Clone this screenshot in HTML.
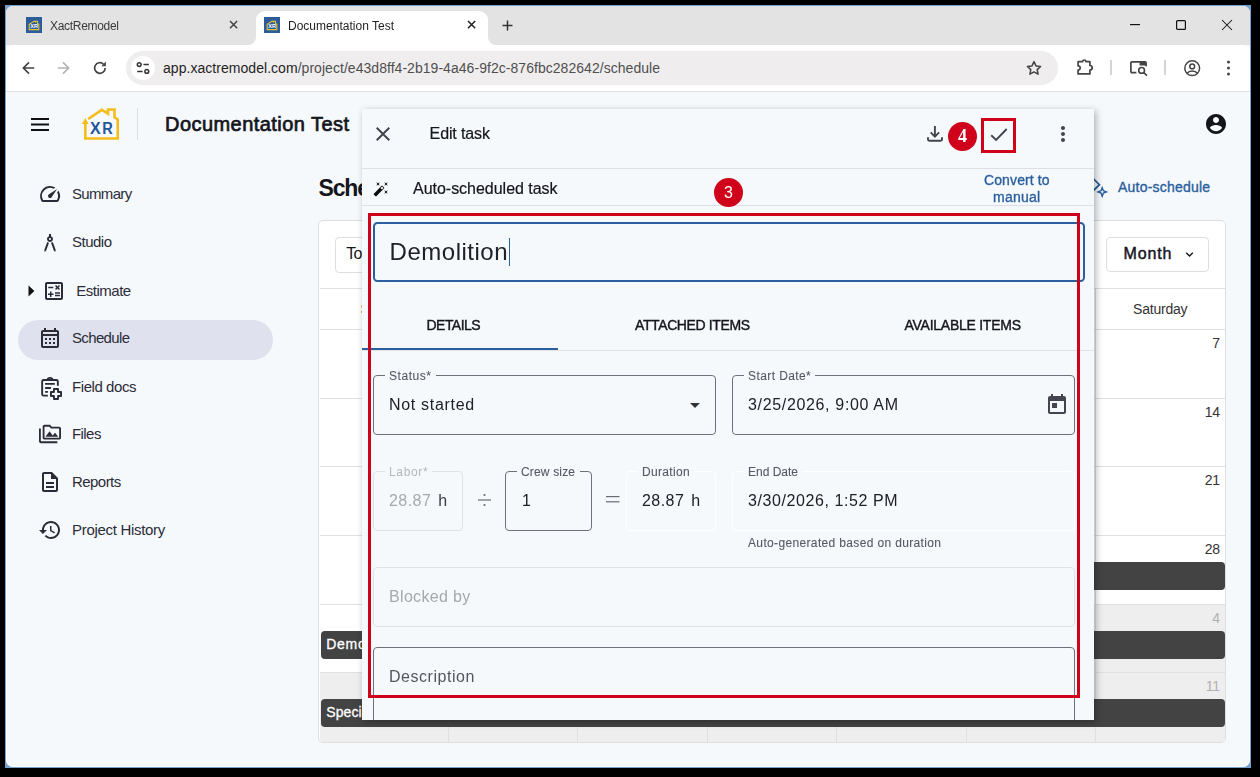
<!DOCTYPE html>
<html><head><meta charset="utf-8"><title>Documentation Test</title>
<style>
*{margin:0;padding:0;box-sizing:border-box}
html,body{width:1260px;height:777px;overflow:hidden;background:#000;font-family:"Liberation Sans",sans-serif}
.t{position:absolute;white-space:nowrap;display:block}
.a{position:absolute}
svg{position:absolute;overflow:visible}
#desk{position:absolute;left:5px;top:5px;width:1246px;height:763px;background:#74a2cc}
#win{position:absolute;left:6px;top:6px;width:1244px;height:761px;border-radius:7px;overflow:hidden;background:#f6f9fc}
#abs{position:absolute;left:-6px;top:-6px;width:1260px;height:777px}
</style></head>
<body>
<div id="desk"></div><div id="win"><div id="abs">
<div class="a" style="left:0.00px;top:0.00px;width:1260.00px;height:45.00px;background:#e3e3e3"></div>
<div class="a" style="left:256.00px;top:11.00px;width:232.00px;height:35.00px;background:#fff;border-radius:9px 9px 0 0"></div>
<svg style="left:248.00px;top:37.00px;" width="8.00" height="8.00" viewBox="0 0 8 8"><path d="M8 0v8H0A8 8 0 0 0 8 0z" fill="#fff"/></svg>
<svg style="left:488.00px;top:37.00px;" width="8.00" height="8.00" viewBox="0 0 8 8"><path d="M0 0v8h8A8 8 0 0 1 0 0z" fill="#fff"/></svg>
<div class="a" style="left:5.00px;top:45.00px;width:1246.00px;height:46.00px;background:#fff;border-radius:9px 9px 0 0"></div>
<div class="a" style="left:0.00px;top:91.00px;width:1260.00px;height:1.00px;background:#dfe1e5"></div>
<svg style="left:26.00px;top:17.00px;" width="16.00" height="16.00" viewBox="0 0 16 16"><rect width="16" height="16" fill="#2c5c99"/><path d="M3.2 12.6V7.4L8.2 4.1l1.3.9V4.2h2v2.2l1.3.9v5.3z" fill="none" stroke="#e8c33a" stroke-width="1.1"/><text x="8.1" y="11.4" font-family="Liberation Sans" font-weight="700" font-size="5.6" fill="#fff" text-anchor="middle">XR</text></svg>
<svg style="left:264.00px;top:17.00px;" width="16.00" height="16.00" viewBox="0 0 16 16"><rect width="16" height="16" fill="#2c5c99"/><path d="M3.2 12.6V7.4L8.2 4.1l1.3.9V4.2h2v2.2l1.3.9v5.3z" fill="none" stroke="#e8c33a" stroke-width="1.1"/><text x="8.1" y="11.4" font-family="Liberation Sans" font-weight="700" font-size="5.6" fill="#fff" text-anchor="middle">XR</text></svg>
<span id="tab1" class="t" style="left:50.00px;top:18.04px;font:400 12px/16px 'Liberation Sans', sans-serif;color:#3a3a3a;letter-spacing:-0.305px;will-change:transform;">XactRemodel</span>
<span id="tab2" class="t" style="left:288.00px;top:18.04px;font:400 12px/16px 'Liberation Sans', sans-serif;color:#1f1f1f;letter-spacing:0.009px;will-change:transform;">Documentation Test</span>
<svg style="left:230.40px;top:21.40px;" width="7.20" height="7.20" viewBox="0 0 7.2 7.2"><path d="M0 0L7.2 7.2 M7.2 0L0 7.2" stroke="#444" stroke-width="1.5" fill="none"/></svg>
<svg style="left:468.40px;top:21.40px;" width="7.20" height="7.20" viewBox="0 0 7.2 7.2"><path d="M0 0L7.2 7.2 M7.2 0L0 7.2" stroke="#222" stroke-width="1.5" fill="none"/></svg>
<svg style="left:502.00px;top:20.00px;" width="11.00" height="11.00" viewBox="0 0 11 11"><path d="M5.5 0.5v10M0.5 5.5h10" stroke="#333" stroke-width="1.5" fill="none"/></svg>
<svg style="left:1130.00px;top:24.00px;" width="10.00" height="1.20" viewBox="0 0 10 1.2"><rect width="10" height="1.2" fill="#111"/></svg>
<svg style="left:1176.00px;top:20.00px;" width="10.00" height="10.00" viewBox="0 0 10 10"><rect x=".6" y=".6" width="8.8" height="8.8" rx="1" fill="none" stroke="#111" stroke-width="1.2"/></svg>
<svg style="left:1222.00px;top:20.00px;" width="10.00" height="10.00" viewBox="0 0 10 10"><path d="M0 0L10 10 M10 0L0 10" stroke="#111" stroke-width="1.05" fill="none"/></svg>
<svg style="left:21.50px;top:61.00px;" width="14.00" height="14.00" viewBox="0 0 14 14"><path d="M12.2 7H1.8M7 1.4L1.4 7 7 12.6" stroke="#444" stroke-width="1.7" fill="none" stroke-linejoin="miter"/></svg>
<svg style="left:56.40px;top:61.00px;" width="14.00" height="14.00" viewBox="0 0 14 14"><g transform="translate(14 0) scale(-1 1)"><path d="M12.2 7H1.8M7 1.4L1.4 7 7 12.6" stroke="#b4b4b4" stroke-width="1.7" fill="none" stroke-linejoin="miter"/></g></svg>
<svg style="left:93.00px;top:61.00px;" width="14.00" height="14.00" viewBox="0 0 14 14"><path d="M12.2 7A5.3 5.3 0 1 1 10.4 3" stroke="#444" stroke-width="1.7" fill="none"/><path d="M12.9 0.6v4.6H8.3z" fill="#444"/></svg>
<div class="a" style="left:126.00px;top:51.00px;width:932.00px;height:34.00px;background:#efedee;border-radius:17px"></div>
<div class="a" style="left:131.00px;top:56.00px;width:24.00px;height:24.00px;background:#fff;border-radius:12px"></div>
<svg style="left:136.00px;top:61.00px;" width="14.00" height="14.00" viewBox="0 0 14 14"><g stroke="#333" stroke-width="1.5" fill="none"><circle cx="3.2" cy="3.6" r="1.9"/><path d="M7.4 3.6h5.4M1.2 10.4h5.4"/><circle cx="10.8" cy="10.4" r="1.9"/></g></svg>
<span id="url" class="t" style="left:163.00px;top:58.75px;font:400 14px/18px 'Liberation Sans', sans-serif;color:#4f4f4f;letter-spacing:0.042px;"><span style="color:#1f1f1f">app.xactremodel.com</span>/project/e43d8ff4-2b19-4a46-9f2c-876fbc282642/schedule</span>
<svg style="left:1026.00px;top:60.00px;" width="16.00" height="16.00" viewBox="0 0 16 16"><path d="M8 1.6l2 4.3 4.6.5-3.4 3.2.9 4.6L8 11.9l-4.1 2.3.9-4.6L1.4 6.4 6 5.9z" fill="none" stroke="#444" stroke-width="1.5" stroke-linejoin="round"/></svg>
<svg style="left:1076.50px;top:59.00px;" width="17.00" height="16.00" viewBox="0 0 17 16"><path d="M1.1 2.7H5.6a1.7 1.7 0 0 1 3.4 0H12.9V6.5a2.3 2.3 0 0 1 0 4.6V14.9H1.1V11a2.1 2.1 0 0 0 0-4.2z" fill="none" stroke="#444" stroke-width="1.7" stroke-linejoin="round"/></svg>
<div class="a" style="left:1110.30px;top:60.00px;width:1.30px;height:15.00px;background:#d5d5d5"></div>
<svg style="left:1129.50px;top:61.00px;" width="18.00" height="15.00" viewBox="0 0 18 15"><path d="M6.4 11.6H1.9a1 1 0 0 1-1-1V1.9a1 1 0 0 1 1-1h13.2a1 1 0 0 1 1 1v3.4" fill="none" stroke="#444" stroke-width="1.7"/><rect x="9.6" y="0.9" width="6.5" height="3.6" fill="#444"/><circle cx="11.6" cy="9.4" r="2.9" fill="none" stroke="#444" stroke-width="1.6"/><path d="M13.8 11.6l3.2 3" stroke="#444" stroke-width="1.7"/></svg>
<div class="a" style="left:1164.30px;top:60.00px;width:1.30px;height:15.00px;background:#d5d5d5"></div>
<svg style="left:1183.50px;top:59.50px;" width="16.40" height="16.40" viewBox="0 0 16.4 16.4"><circle cx="8.2" cy="8.2" r="7.4" fill="none" stroke="#444" stroke-width="1.5"/><circle cx="8.2" cy="6.4" r="2.4" fill="none" stroke="#444" stroke-width="1.5"/><path d="M3 13.2c1.2-1.6 3-2.3 5.2-2.3s4 .7 5.2 2.3" fill="none" stroke="#444" stroke-width="1.5"/></svg>
<svg style="left:1226.50px;top:60.00px;" width="3.00" height="16.00" viewBox="0 0 3 16"><circle cx="1.5" cy="2" r="1.5" fill="#444"/><circle cx="1.5" cy="8" r="1.5" fill="#444"/><circle cx="1.5" cy="14" r="1.5" fill="#444"/></svg>
<div class="a" style="left:6.00px;top:92.00px;width:1244.00px;height:675.00px;border:1px solid #fff;border-top:0;border-radius:0 0 7px 7px"></div>
<svg style="left:31.00px;top:118.00px;" width="18.00" height="13.00" viewBox="0 0 18 13"><path d="M0 1h18M0 6.5h18M0 12h18" stroke="#111" stroke-width="2" fill="none"/></svg>
<svg style="left:80.00px;top:106.00px;" width="42.00" height="36.00" viewBox="0 0 42 36"><path d="M8.2 13L21.8 3.8 28 7.7V3.45H34.5V11.3L37.75 13.4V32.45H5.35V17" fill="none" stroke="#f5bc1a" stroke-width="2.6" stroke-linejoin="miter"/><path d="M5.3 12.1L1.9 17.9h6.8z" fill="#f5bc1a"/><g font-family="Liberation Sans" font-weight="700" font-size="16.6" fill="#1f5799"><text x="10" y="27.7" transform="translate(10 0) scale(.96 1) translate(-10 0)">X</text><text x="0" y="27.7" transform="translate(22.2 0) scale(.88 1)">R</text></g></svg>
<div class="a" style="left:137.00px;top:108.00px;width:1.00px;height:32.00px;background:#dcdfe4"></div>
<span id="title" class="t" style="left:165.00px;top:110.67px;font:400 20px/26px 'Liberation Sans', sans-serif;color:#15151c;letter-spacing:0.447px;-webkit-text-stroke:0.70px #15151c;">Documentation Test</span>
<svg style="left:1204.00px;top:112.00px;" width="24.00" height="24.00" viewBox="0 0 24 24"><path d="M12 2C6.48 2 2 6.48 2 12s4.48 10 10 10 10-4.48 10-10S17.52 2 12 2zm0 3c1.66 0 3 1.34 3 3s-1.34 3-3 3-3-1.34-3-3 1.34-3 3-3zm0 14.2c-2.5 0-4.71-1.28-6-3.22.03-1.99 4-3.08 6-3.08 1.99 0 5.97 1.09 6 3.08-1.29 1.94-3.5 3.22-6 3.22z" fill="#15151c"/></svg>
<div class="a" style="left:18.00px;top:320.00px;width:255.00px;height:40.00px;background:#dfe2ee;border-radius:20px"></div>
<span id="nav0" class="t" style="left:72.00px;top:184.20px;font:400 15px/20px 'Liberation Sans', sans-serif;color:#2c2c38;letter-spacing:-0.665px;">Summary</span>
<svg style="left:38.00px;top:182.00px;" width="24.00" height="24.00" viewBox="0 0 24 24"><path d="M20.38 8.57l-1.23 1.85a8 8 0 0 1-.22 7.58H5.07A8 8 0 0 1 15.58 6.85l1.85-1.23A10 10 0 0 0 3.35 19a2 2 0 0 0 1.72 1h13.85a2 2 0 0 0 1.74-1 10 10 0 0 0-.27-10.44zm-9.79 6.84a2 2 0 0 0 2.83 0l5.66-8.49-8.49 5.66a2 2 0 0 0 0 2.83z" fill="#2c2c38"/></svg>
<span id="nav1" class="t" style="left:72.00px;top:232.20px;font:400 15px/20px 'Liberation Sans', sans-serif;color:#2c2c38;letter-spacing:-0.509px;">Studio</span>
<svg style="left:38.00px;top:231.00px;" width="24.00" height="24.00" viewBox="0 0 24 24"><path d="M6.36 18.78L6.61 21l1.62-1.54 2.77-7.6c-.68-.17-1.28-.51-1.77-.98l-2.87 7.9zM14.77 10.88c-.49.47-1.1.81-1.77.98l2.77 7.6L17.39 21l.26-2.22-2.88-7.9zM15 8c0-1.3-.84-2.4-2-2.82V3h-2v2.18C9.84 5.6 9 6.7 9 8c0 1.66 1.34 3 3 3s3-1.34 3-3zm-3 1c-.55 0-1-.45-1-1s.45-1 1-1 1 .45 1 1-.45 1-1 1z" fill="#2c2c38"/></svg>
<span id="nav2" class="t" style="left:76.30px;top:281.20px;font:400 15px/20px 'Liberation Sans', sans-serif;color:#2c2c38;letter-spacing:-0.494px;">Estimate</span>
<svg style="left:42.00px;top:279.00px;" width="24.00" height="24.00" viewBox="0 0 24 24"><path d="M19 3H5c-1.1 0-2 .9-2 2v14c0 1.1.9 2 2 2h14c1.1 0 2-.9 2-2V5c0-1.1-.9-2-2-2zm0 16H5V5h14v14zM6.25 7.72h5v1.5h-5zM13 15.75h5v1.5h-5zM13 13.25h5v1.5h-5zM8 18h1.5v-2h2v-1.5h-2v-2H8v2H6V16h2zM14.09 10.95l1.41-1.41 1.41 1.41 1.06-1.06-1.41-1.42 1.41-1.41L16.91 6 15.5 7.41 14.09 6l-1.06 1.06 1.41 1.41-1.41 1.42z" fill="#2c2c38"/></svg>
<span id="nav3" class="t" style="left:72.00px;top:328.20px;font:400 15px/20px 'Liberation Sans', sans-serif;color:#2c2c38;letter-spacing:-0.652px;">Schedule</span>
<svg style="left:38.00px;top:326.00px;" width="24.00" height="24.00" viewBox="0 0 24 24"><path d="M19 4h-1V2h-2v2H8V2H6v2H5c-1.11 0-1.99.9-1.99 2L3 20c0 1.1.89 2 2 2h14c1.1 0 2-.9 2-2V6c0-1.1-.9-2-2-2zm0 16H5V10h14v10zm0-12H5V6h14v2zM7 12h2v2H7zm4 0h2v2h-2zm4 0h2v2h-2zM7 16h2v2H7zm4 0h2v2h-2zm4 0h2v2h-2z" fill="#2c2c38"/></svg>
<span id="nav4" class="t" style="left:72.00px;top:377.20px;font:400 15px/20px 'Liberation Sans', sans-serif;color:#2c2c38;letter-spacing:-0.431px;">Field docs</span>
<span id="nav5" class="t" style="left:72.00px;top:424.20px;font:400 15px/20px 'Liberation Sans', sans-serif;color:#2c2c38;letter-spacing:-0.568px;">Files</span>
<svg style="left:39.00px;top:423.00px;" width="22.00" height="22.00" viewBox="0 0 24 24"><path d="M2 6H0v5h.01L0 20c0 1.1.9 2 2 2h18v-2H2V6zm5 9h14l-3.5-4.5-2.5 3.01L11.5 9zM22 4h-8l-2-2H6c-1.1 0-1.99.9-1.99 2L4 16c0 1.1.9 2 2 2h16c1.1 0 2-.9 2-2V6c0-1.1-.9-2-2-2zm0 12H6V4h5.17l1.41 1.41.59.59H22v10z" fill="#2c2c38"/></svg>
<span id="nav6" class="t" style="left:72.00px;top:472.20px;font:400 15px/20px 'Liberation Sans', sans-serif;color:#2c2c38;letter-spacing:-0.555px;">Reports</span>
<svg style="left:38.00px;top:470.00px;" width="24.00" height="24.00" viewBox="0 0 24 24"><path d="M8 16h8v2H8zm0-4h8v2H8zm6-10H6c-1.1 0-2 .9-2 2v16c0 1.1.89 2 1.99 2H18c1.1 0 2-.9 2-2V8l-6-6zm4 18H6V4h7v5h5v11z" fill="#2c2c38"/></svg>
<span id="nav7" class="t" style="left:72.00px;top:520.20px;font:400 15px/20px 'Liberation Sans', sans-serif;color:#2c2c38;letter-spacing:-0.302px;">Project History</span>
<svg style="left:38.00px;top:518.00px;" width="24.00" height="24.00" viewBox="0 0 24 24"><path d="M13 3c-4.97 0-9 4.03-9 9H1l3.89 3.89.07.14L9 12H6c0-3.87 3.13-7 7-7s7 3.13 7 7-3.13 7-7 7c-1.93 0-3.68-.79-4.94-2.06l-1.42 1.42C8.27 19.99 10.51 21 13 21c4.97 0 9-4.03 9-9s-4.03-9-9-9zm-1 5v5l4.28 2.54.72-1.21-3.5-2.08V8H12z" fill="#2c2c38"/></svg>
<svg style="left:38.00px;top:374.00px;" width="26.00" height="28.00" viewBox="0 0 26 28"><g fill="none" stroke="#2c2c38" stroke-width="1.9"><path d="M19.85 11.7V7.5Q19.85 6 18.35 6H5.65Q4.15 6 4.15 7.5V20.15Q4.15 21.65 5.65 21.65H9.9"/><path d="M9.4 6Q9.7 3.9 12 3.9Q14.3 3.9 14.6 6" stroke-width="1.8"/><path d="M7.1 9.9H16.8M7.1 14H12.9M7.1 17.9H9.9"/><path d="M15.95 14.95H20.05V17.95H23.05V22.05H20.05V24.95H15.95V22.05H12.95V17.95H15.95Z" stroke-linejoin="round"/></g></svg>
<svg style="left:28.00px;top:285.00px;" width="7.00" height="12.00" viewBox="0 0 7 12"><path d="M.5 .6L6.4 6 .5 11.4z" fill="#111"/></svg>
<span id="h1" class="t" style="left:318.40px;top:173.43px;font:700 23px/30px 'Liberation Sans', sans-serif;color:#15151c;letter-spacing:-1.094px;">Schedule</span>
<svg style="left:1076.00px;top:172.00px;" width="32.00" height="26.00" viewBox="0 0 32 26"><g fill="none" stroke="#2b5f9e" stroke-width="1.8" stroke-linejoin="miter"><path d="M15 4.4l8.4 8.3L15 21"/><path d="M26.2 15.7l1.15 3.05 3.05 1.2-3.05 1.2-1.15 3.05-1.15-3.05-3.05-1.2 3.05-1.2z" stroke-width="1.4"/></g></svg>
<span id="autos" class="t" style="left:1118.00px;top:178.35px;font:400 14px/18px 'Liberation Sans', sans-serif;color:#2b5f9e;letter-spacing:0.207px;-webkit-text-stroke:0.35px #2b5f9e;">Auto-schedule</span>
<div class="a" style="left:318.00px;top:220.00px;width:908.00px;height:523.00px;background:#fff;border:1px solid #dedede;border-radius:5px"></div>
<div class="a" style="left:707.37px;top:604.00px;width:517.63px;height:68.50px;background:#eeeeee"></div>
<div class="a" style="left:319.50px;top:672.50px;width:905.50px;height:69.00px;background:#eeeeee;border-radius:0 0 4px 4px"></div>
<div class="a" style="left:319.50px;top:287.50px;width:905.50px;height:1.00px;background:#e0e0e0"></div>
<div class="a" style="left:319.50px;top:328.50px;width:905.50px;height:1.00px;background:#e0e0e0"></div>
<div class="a" style="left:319.50px;top:397.50px;width:905.50px;height:1.00px;background:#e0e0e0"></div>
<div class="a" style="left:319.50px;top:466.00px;width:905.50px;height:1.00px;background:#e0e0e0"></div>
<div class="a" style="left:319.50px;top:534.50px;width:905.50px;height:1.00px;background:#e0e0e0"></div>
<div class="a" style="left:319.50px;top:603.50px;width:905.50px;height:1.00px;background:#e0e0e0"></div>
<div class="a" style="left:319.50px;top:672.00px;width:905.50px;height:1.00px;background:#e0e0e0"></div>
<div class="a" style="left:447.79px;top:288.00px;width:1.00px;height:453.50px;background:#e0e0e0"></div>
<div class="a" style="left:577.33px;top:288.00px;width:1.00px;height:453.50px;background:#e0e0e0"></div>
<div class="a" style="left:706.87px;top:288.00px;width:1.00px;height:453.50px;background:#e0e0e0"></div>
<div class="a" style="left:836.41px;top:288.00px;width:1.00px;height:453.50px;background:#e0e0e0"></div>
<div class="a" style="left:965.95px;top:288.00px;width:1.00px;height:453.50px;background:#e0e0e0"></div>
<div class="a" style="left:1095.49px;top:288.00px;width:1.00px;height:453.50px;background:#e0e0e0"></div>
<div class="a" style="left:335.00px;top:237.00px;width:66.00px;height:36.00px;border:1px solid #dedede;border-radius:4px;background:#fff"></div>
<span id="today" class="t" style="left:346.20px;top:242.86px;font:400 16px/21px 'Liberation Sans', sans-serif;color:#15151c;letter-spacing:-0.706px;">Today</span>
<div class="a" style="left:1106.00px;top:237.00px;width:103.00px;height:35.00px;border:1px solid #dedede;border-radius:4px;background:#fff"></div>
<span id="month" class="t" style="left:1123.60px;top:242.86px;font:400 16px/21px 'Liberation Sans', sans-serif;color:#15151c;letter-spacing:0.833px;-webkit-text-stroke:0.45px #15151c;">Month</span>
<svg style="left:1185.00px;top:250.50px;" width="9.00" height="7.00" viewBox="0 0 9 7"><path d="M1.2 1.8l3.3 3.2 3.3-3.2" fill="none" stroke="#15151c" stroke-width="1.4"/></svg>
<span id="sat" class="t" style="left:1133.00px;top:300.15px;font:400 14px/18px 'Liberation Sans', sans-serif;color:#333;letter-spacing:-0.207px;">Saturday</span>
<span id="sun" class="t" style="left:360.50px;top:300.15px;font:400 14px/18px 'Liberation Sans', sans-serif;color:#333;letter-spacing:0.203px;">Sunday</span>
<span class="t" style="right:40.1px;top:333.7px;font:400 14px/18px 'Liberation Sans',sans-serif;color:#333;letter-spacing:-.2px">7</span>
<span class="t" style="right:40.1px;top:402.7px;font:400 14px/18px 'Liberation Sans',sans-serif;color:#333;letter-spacing:-.2px">14</span>
<span class="t" style="right:40.1px;top:470.7px;font:400 14px/18px 'Liberation Sans',sans-serif;color:#333;letter-spacing:-.2px">21</span>
<span class="t" style="right:40.1px;top:539.7px;font:400 14px/18px 'Liberation Sans',sans-serif;color:#333;letter-spacing:-.2px">28</span>
<span class="t" style="right:40.1px;top:608.7px;font:400 14px/18px 'Liberation Sans',sans-serif;color:#b0b0b0;letter-spacing:-.2px">4</span>
<span class="t" style="right:40.1px;top:676.7px;font:400 14px/18px 'Liberation Sans',sans-serif;color:#b0b0b0;letter-spacing:-.2px">11</span>
<div class="a" style="left:709.37px;top:562.00px;width:515.63px;height:28.00px;background:#434343;border-radius:4px"></div>
<div class="a" style="left:321.00px;top:631.00px;width:904.00px;height:28.00px;background:#434343;border-radius:4px"></div>
<div class="a" style="left:321.00px;top:699.00px;width:904.00px;height:28.00px;background:#434343;border-radius:4px"></div>
<span id="ev1" class="t" style="left:326.20px;top:634.75px;font:400 14px/18px 'Liberation Sans', sans-serif;color:#fff;letter-spacing:0.719px;-webkit-text-stroke:0.30px #fff;">Demolition</span>
<span id="ev2" class="t" style="left:326.20px;top:703.15px;font:400 14px/18px 'Liberation Sans', sans-serif;color:#fff;letter-spacing:0.126px;-webkit-text-stroke:0.30px #fff;">Special</span>
<div class="a" style="left:362.00px;top:109.00px;width:732.00px;height:610.50px;background:#f6f9fc;box-shadow:2px 2px 7px rgba(0,0,0,.3)"></div>
<div class="a" style="left:362px;top:109px;width:732px;height:610.5px;overflow:hidden;will-change:transform"><div class="a" style="left:-362px;top:-109px;width:1260px;height:777px">
<svg style="left:371.00px;top:122.00px;" width="24.00" height="24.00" viewBox="0 0 24 24"><path d="M19 6.41L17.59 5 12 10.59 6.41 5 5 6.41 10.59 12 5 17.59 6.41 19 12 13.41 17.59 19 19 17.59 13.41 12z" fill="#44444f"/></svg>
<span id="edit" class="t" style="left:429.60px;top:123.26px;font:400 16px/21px 'Liberation Sans', sans-serif;color:#15151c;letter-spacing:-0.120px;-webkit-text-stroke:0.20px #15151c;">Edit task</span>
<svg style="left:925.00px;top:124.00px;" width="20.00" height="19.00" viewBox="0 0 20 19"><g fill="none" stroke="#44444f" stroke-width="1.9"><path d="M9.9 2v10.4M5.7 8.4l4.2 4.2 4.2-4.2" stroke-linejoin="miter"/><path d="M3 13.2v2.3q0 1.2 1.2 1.2h11.6q1.2 0 1.2-1.2v-2.3"/></g></svg>
<svg style="left:985.00px;top:122.00px;" width="28.00" height="26.00" viewBox="0 0 28 26"><path d="M6.2 13.3l4.9 4.6L21.7 7" fill="none" stroke="#44444f" stroke-width="1.9" stroke-linejoin="miter"/></svg>
<svg style="left:1051.00px;top:122.00px;" width="24.00" height="24.00" viewBox="0 0 24 24"><path d="M12 8c1.1 0 2-.9 2-2s-.9-2-2-2-2 .9-2 2 .9 2 2 2zm0 2c-1.1 0-2 .9-2 2s.9 2 2 2 2-.9 2-2-.9-2-2-2zm0 6c-1.1 0-2 .9-2 2s.9 2 2 2 2-.9 2-2-.9-2-2-2z" fill="#44444f"/></svg>
<div class="a" style="left:362.00px;top:167.50px;width:732.00px;height:1.00px;background:#dcdfe3"></div>
<svg style="left:373.10px;top:180.80px;" width="16.00" height="16.00" viewBox="0 0 24 24"><path d="M7.5 5.6L10 7 8.6 4.5 10 2 7.5 3.4 5 2l1.4 2.5L5 7zm12 9.8L17 14l1.4 2.5L17 19l2.5-1.4L22 19l-1.4-2.5L22 14zM22 2l-2.5 1.4L17 2l1.4 2.5L17 7l2.5-1.4L22 7l-1.4-2.5zm-7.63 5.29c-.39-.39-1.02-.39-1.41 0L1.29 18.96c-.39.39-.39 1.02 0 1.41l2.34 2.34c.39.39 1.02.39 1.41 0L16.7 11.05c.39-.39.39-1.02 0-1.41l-2.33-2.35zm-1.03 5.49l-2.12-2.12 2.44-2.44 2.12 2.12-2.44 2.44z" fill="#0c0c0c"/></svg>
<span id="autotask" class="t" style="left:413.00px;top:178.26px;font:400 16px/21px 'Liberation Sans', sans-serif;color:#15151c;letter-spacing:-0.021px;-webkit-text-stroke:0.20px #15151c;">Auto-scheduled task</span>
<span id="conv1" class="t" style="left:984.00px;top:171.35px;font:400 14px/18px 'Liberation Sans', sans-serif;color:#2b5f9e;letter-spacing:0.112px;-webkit-text-stroke:0.35px #2b5f9e;">Convert to</span>
<span id="conv2" class="t" style="left:993.00px;top:188.35px;font:400 14px/18px 'Liberation Sans', sans-serif;color:#2b5f9e;letter-spacing:0.256px;-webkit-text-stroke:0.35px #2b5f9e;">manual</span>
<div class="a" style="left:362.00px;top:204.50px;width:732.00px;height:1.00px;background:#dcdfe3"></div>
<div class="a" style="left:373.00px;top:222.00px;width:711.50px;height:59.50px;border:2px solid #2b5f9e;border-radius:4.5px"></div>
<span id="name" class="t" style="left:389.60px;top:236.38px;font:400 24px/31px 'Liberation Sans', sans-serif;color:#202028;letter-spacing:0.512px;">Demolition</span>
<div class="a" style="left:509.30px;top:238.00px;width:1.00px;height:27.50px;background:#2b5f9e"></div>
<span id="tabA" class="t" style="left:426.50px;top:315.75px;font:400 14px/18px 'Liberation Sans', sans-serif;color:#15151c;letter-spacing:-0.535px;-webkit-text-stroke:0.40px #15151c;">DETAILS</span>
<span id="tabB" class="t" style="left:635.00px;top:315.75px;font:400 14px/18px 'Liberation Sans', sans-serif;color:#15151c;letter-spacing:-0.388px;-webkit-text-stroke:0.40px #15151c;">ATTACHED ITEMS</span>
<span id="tabC" class="t" style="left:904.50px;top:315.75px;font:400 14px/18px 'Liberation Sans', sans-serif;color:#15151c;letter-spacing:-0.257px;-webkit-text-stroke:0.40px #15151c;">AVAILABLE ITEMS</span>
<div class="a" style="left:362.00px;top:350.00px;width:732.00px;height:1.00px;background:#e1e3e7"></div>
<div class="a" style="left:362.00px;top:347.70px;width:196.00px;height:2.30px;background:#2b5f9e"></div>
<div class="a" style="left:373.00px;top:375.00px;width:343.00px;height:59.50px;border:1px solid #70707c;border-radius:4px"></div><div class="a" style="left:385.00px;top:374.00px;width:50.50px;height:3.00px;background:#f6f9fc"></div>
<span id="lstatus" class="t" style="left:389.00px;top:367.84px;font:400 12px/16px 'Liberation Sans', sans-serif;color:#585864;letter-spacing:0.549px;-webkit-text-stroke:0.10px #585864;">Status*</span>
<span id="vstatus" class="t" style="left:389.00px;top:393.96px;font:400 16px/21px 'Liberation Sans', sans-serif;color:#202028;letter-spacing:0.693px;">Not started</span>
<svg style="left:690.00px;top:402.50px;" width="10.00" height="5.00" viewBox="0 0 10 5"><path d="M0 0h10L5 5z" fill="#333"/></svg>
<div class="a" style="left:732.00px;top:375.00px;width:343.00px;height:59.50px;border:1px solid #70707c;border-radius:4px"></div><div class="a" style="left:744.00px;top:374.00px;width:71.30px;height:3.00px;background:#f6f9fc"></div>
<span id="lstart" class="t" style="left:748.00px;top:367.84px;font:400 12px/16px 'Liberation Sans', sans-serif;color:#585864;letter-spacing:0.410px;-webkit-text-stroke:0.10px #585864;">Start Date*</span>
<span id="vstart" class="t" style="left:748.00px;top:393.96px;font:400 16px/21px 'Liberation Sans', sans-serif;color:#202028;letter-spacing:0.660px;">3/25/2026, 9:00 AM</span>
<svg style="left:1045.00px;top:392.60px;" width="24.00" height="24.00" viewBox="0 0 24 24"><path d="M19 3h-1V1h-2v2H8V1H6v2H5c-1.11 0-1.99.9-1.99 2L3 19c0 1.1.89 2 2 2h14c1.1 0 2-.9 2-2V5c0-1.1-.9-2-2-2zm0 16H5V8h14v11zM7 10h5v5H7z" fill="#45454f"/></svg>
<div class="a" style="left:373.00px;top:471.00px;width:90.00px;height:59.50px;border:1px solid #dfe1e6;border-radius:4px"></div><div class="a" style="left:385.00px;top:470.00px;width:47.00px;height:3.00px;background:#f6f9fc"></div>
<span id="llabor" class="t" style="left:389.00px;top:463.84px;font:400 12px/16px 'Liberation Sans', sans-serif;color:#b4b6bb;letter-spacing:0.645px;">Labor*</span>
<span id="vlabor" class="t" style="left:389.00px;top:490.36px;font:400 16px/21px 'Liberation Sans', sans-serif;color:#a6a8ad;letter-spacing:0.438px;">28.87</span>
<span id="vlaborh" class="t" style="left:438.20px;top:490.36px;font:400 16px/21px 'Liberation Sans', sans-serif;color:#3a3a44;letter-spacing:-1.106px;">h</span>
<svg style="left:477.50px;top:493.00px;" width="13.00" height="14.00" viewBox="0 0 13 14"><g fill="#6a6a72"><rect x="0" y="6.4" width="13" height="1.2"/><circle cx="6.5" cy="2" r="1.1"/><circle cx="6.5" cy="12" r="1.1"/></g></svg>
<div class="a" style="left:505.00px;top:471.00px;width:87.00px;height:59.50px;border:1px solid #70707c;border-radius:4px"></div><div class="a" style="left:517.00px;top:470.00px;width:62.50px;height:3.00px;background:#f6f9fc"></div>
<span id="lcrew" class="t" style="left:521.00px;top:463.84px;font:400 12px/16px 'Liberation Sans', sans-serif;color:#585864;letter-spacing:0.164px;-webkit-text-stroke:0.10px #585864;">Crew size</span>
<span id="vcrew" class="t" style="left:522.00px;top:490.36px;font:400 16px/21px 'Liberation Sans', sans-serif;color:#202028;letter-spacing:-1.406px;">1</span>
<svg style="left:606.00px;top:496.40px;" width="13.50" height="6.40" viewBox="0 0 13.5 6.4"><g fill="#6a6a72"><rect width="13.5" height="1.2"/><rect y="5.2" width="13.5" height="1.2"/></g></svg>
<div class="a" style="left:626.00px;top:471.00px;width:90.00px;height:59.50px;border:1px solid #ffffff;border-radius:4px"></div><div class="a" style="left:638.00px;top:470.00px;width:56.00px;height:3.00px;background:#f6f9fc"></div>
<span id="ldur" class="t" style="left:642.00px;top:463.84px;font:400 12px/16px 'Liberation Sans', sans-serif;color:#585864;letter-spacing:0.320px;-webkit-text-stroke:0.10px #585864;">Duration</span>
<span id="vdur" class="t" style="left:642.00px;top:490.36px;font:400 16px/21px 'Liberation Sans', sans-serif;color:#202028;letter-spacing:0.438px;">28.87</span>
<span id="vdurh" class="t" style="left:691.20px;top:490.36px;font:400 16px/21px 'Liberation Sans', sans-serif;color:#202028;letter-spacing:-1.106px;">h</span>
<div class="a" style="left:732.00px;top:471.00px;width:343.00px;height:59.50px;border:1px solid #ffffff;border-radius:4px"></div><div class="a" style="left:744.00px;top:470.00px;width:58.50px;height:3.00px;background:#f6f9fc"></div>
<span id="lend" class="t" style="left:748.00px;top:463.84px;font:400 12px/16px 'Liberation Sans', sans-serif;color:#585864;letter-spacing:-0.007px;-webkit-text-stroke:0.10px #585864;">End Date</span>
<span id="vend" class="t" style="left:748.00px;top:490.36px;font:400 16px/21px 'Liberation Sans', sans-serif;color:#202028;letter-spacing:0.585px;">3/30/2026, 1:52 PM</span>
<span id="helper" class="t" style="left:748.00px;top:535.14px;font:400 12px/16px 'Liberation Sans', sans-serif;color:#585864;letter-spacing:0.350px;-webkit-text-stroke:0.10px #585864;">Auto-generated based on duration</span>
<div class="a" style="left:373.00px;top:566.50px;width:702.00px;height:60.50px;border:1px solid #dfe1e6;border-radius:4px"></div>
<span id="blocked" class="t" style="left:389.00px;top:585.96px;font:400 16px/21px 'Liberation Sans', sans-serif;color:#a6a8ad;letter-spacing:0.326px;">Blocked by</span>
<div class="a" style="left:373.00px;top:647.00px;width:702.00px;height:83.00px;border:1px solid #70707c;border-radius:4px"></div>
<span id="desc" class="t" style="left:389.00px;top:665.96px;font:400 16px/21px 'Liberation Sans', sans-serif;color:#55555f;letter-spacing:0.537px;">Description</span>
</div></div>
<div class="a" style="left:368.00px;top:213.00px;width:712.00px;height:485.00px;border:3px solid #d0021b"></div>
<div class="a" style="left:981.00px;top:118.00px;width:35.00px;height:35.00px;border:3px solid #d0021b"></div>
<div class="a" style="left:713.80px;top:177.80px;width:29.50px;height:29.50px;background:#d0021b;border-radius:50%"></div>
<div class="a" style="left:947.70px;top:121.70px;width:29.40px;height:29.50px;background:#d0021b;border-radius:50%"></div>
<span class="t" style="left:714px;top:178px;width:29px;text-align:center;font:400 16px/29px 'Liberation Sans',sans-serif;color:#fff">3</span>
<span class="t" style="left:948px;top:122px;width:29px;text-align:center;font:700 18px/28.4px 'Liberation Serif',serif;color:#fff">4</span>
</div></div>
</body></html>
